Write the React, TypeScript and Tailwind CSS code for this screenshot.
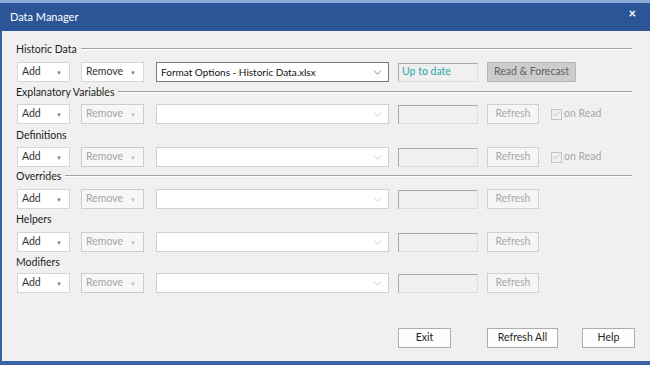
import { Check, ChevronDown } from 'lucide-react'

type RowProps = {
  enabled?: boolean
  file?: string
  status?: string
  action: string
  actionWide?: boolean
  onRead?: boolean
  mt: string
}

function Section({ title, mt }: { title: string; mt: string }) {
  return (
    <div className={`flex items-center h-[14px] pl-[14px] ${mt}`}>
      <span className="text-[10.5px] leading-[14px] text-[#1e1e1e] whitespace-nowrap">{title}</span>
      <div className="flex-1 ml-[4px] mr-[18px] h-[2px] border-t border-[#a0a0a0] border-b border-b-white" />
    </div>
  )
}

function SmallLabel({ title, mt }: { title: string; mt: string }) {
  return <div className={`h-[14px] pl-[14px] text-[10.5px] leading-[14px] text-[#1e1e1e] ${mt}`}>{title}</div>
}

function Picker({ label, width, disabled }: { label: string; width: string; disabled?: boolean }) {
  return (
    <div
      className={`${width} h-[20px] flex items-center justify-between pl-[4px] pr-[7px] border ${
        disabled ? 'border-[#cccccc] bg-[#f7f7f7] text-[#a3a3a3]' : 'border-[#d6d6d6] bg-white text-[#333]'
      }`}
    >
      <span className="text-[10.5px]">{label}</span>
      <span className={`text-[6px] ${disabled ? 'text-[#c4c4c4]' : 'text-[#808080]'}`}>▼</span>
    </div>
  )
}

function DataRow({ enabled, file, status, action, actionWide, onRead, mt }: RowProps) {
  return (
    <div className={`flex items-center h-[20px] ml-[15px] ${mt}`}>
      <Picker label="Add" width="w-[53px]" />
      <div className="ml-[11px]">
        <Picker label="Remove" width="w-[63px]" disabled={!enabled} />
      </div>
      <div
        className={`ml-[12px] w-[233px] h-[20px] flex items-center justify-between pl-[4px] pr-[4px] bg-white border ${
          enabled ? 'border-[#7a7a7a]' : 'border-[#d0d0d0]'
        }`}
      >
        <span className="text-[10px] text-[#111]">{file}</span>
        <ChevronDown size={13} strokeWidth={1.3} className={enabled ? 'text-[#555]' : 'text-[#bbbbbb]'} />
      </div>
      <div className="ml-[9px] w-[80px] h-[19px] flex items-center px-[3px] bg-[#f0f0f0] border border-[#a9a9a9] border-r-[#dcdcdc] border-b-[#dcdcdc]">
        <span className="text-[10.5px] text-[#2aa7a8]">{status}</span>
      </div>
      <div
        className={`ml-[9px] h-[20px] flex items-center justify-center border text-[10.5px] ${
          actionWide
            ? 'w-[89px] bg-[#cccccc] border-[#b5b5b5] text-[#606060]'
            : 'w-[52px] bg-[#f5f5f5] border-[#d0d0d0] text-[#a8a8a8]'
        }`}
      >
        {action}
      </div>
      {onRead && (
        <div className="ml-[12px] flex items-center gap-[2px] text-[10.5px] text-[#a8a8a8]">
          <div className="w-[11px] h-[11px] border border-[#c4c4c4] flex items-center justify-center">
            <Check size={10} strokeWidth={1.6} className="text-[#a8a8a8]" />
          </div>
          <span>on Read</span>
        </div>
      )}
    </div>
  )
}

function Button({ label, width, ml }: { label: string; width: string; ml: string }) {
  return (
    <div
      className={`${width} ${ml} h-[20px] flex items-center justify-center bg-[#fdfdfd] border border-[#adadad] text-[10.5px] text-[#1e1e1e]`}
    >
      {label}
    </div>
  )
}

export default function App() {
  return (
    <div
      className="w-[650px] h-[365px] flex flex-col bg-[#3a64a8] overflow-hidden"
      style={{ fontFamily: 'Lato, "Noto Sans", sans-serif' }}
    >
      {/* Title bar */}
      <div className="h-[3px] bg-[#8aa9d6]" />
      <div className="h-[28px] flex items-center justify-between pl-[10px] pr-[14px] bg-[#2c5597]">
        <span className="text-[11px] text-white">Data Manager</span>
        <span className="text-[13px] font-bold text-white leading-none -mt-[8px]">×</span>
      </div>

      {/* Body */}
      <div className="flex-1 ml-[2px] mb-[4px] bg-[#f0f0f0] flex flex-col">
        <Section title="Historic Data" mt="mt-[11px]" />
        <DataRow
          enabled
          file="Format Options - Historic Data.xlsx"
          status="Up to date"
          action="Read & Forecast"
          actionWide
          mt="mt-[6px]"
        />
        <Section title="Explanatory Variables" mt="mt-[3px]" />
        <DataRow action="Refresh" onRead mt="mt-[5px]" />
        <SmallLabel title="Definitions" mt="mt-[4px]" />
        <DataRow action="Refresh" onRead mt="mt-[5px]" />
        <Section title="Overrides" mt="mt-[2px]" />
        <DataRow action="Refresh" mt="mt-[6px]" />
        <SmallLabel title="Helpers" mt="mt-[3px]" />
        <DataRow action="Refresh" mt="mt-[6px]" />
        <SmallLabel title="Modifiers" mt="mt-[3px]" />
        <DataRow action="Refresh" mt="mt-[4px]" />

        <div className="flex mt-[35px]">
          <Button label="Exit" width="w-[53px]" ml="ml-[396px]" />
          <Button label="Refresh All" width="w-[71px]" ml="ml-[36px]" />
          <Button label="Help" width="w-[53px]" ml="ml-[24px]" />
        </div>
      </div>
    </div>
  )
}
